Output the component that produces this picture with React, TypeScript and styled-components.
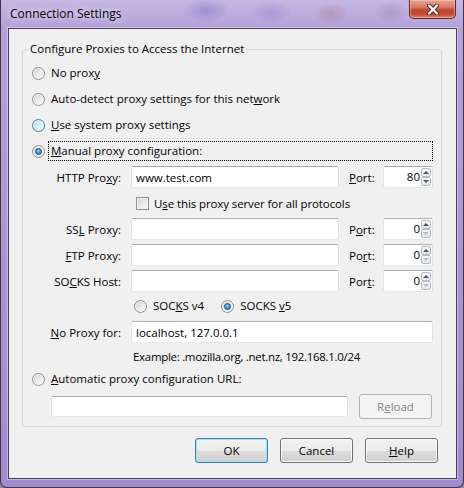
import React from 'react';
import styled, { createGlobalStyle, css } from 'styled-components';

const GlobalStyle = createGlobalStyle`
  html, body {
    margin: 0;
    padding: 0;
  }
  body {
    background: #8c8499;
    font-family: "Open Sans", "Noto Sans", "DejaVu Sans", sans-serif;
    font-size: 11.5px;
    color: #000;
  }
`;

// Aero glass frame round the dialog
const Window = styled.div`
  box-sizing: border-box;
  width: 464px;
  height: 488px;
  display: flex;
  flex-direction: column;
  padding: 0 6px 8px 7px;
  border: 1px solid #3d3550;
  border-top: none;
  border-radius: 0 0 7px 7px;
  background:
    radial-gradient(ellipse 34px 18px at 205px 10px, rgba(96, 92, 180, 0.35), transparent 70%),
    radial-gradient(ellipse 30px 16px at 270px 12px, rgba(130, 100, 200, 0.3), transparent 70%),
    radial-gradient(ellipse 26px 16px at 330px 14px, rgba(160, 100, 110, 0.3), transparent 70%),
    radial-gradient(ellipse 24px 16px at 390px 12px, rgba(120, 110, 150, 0.3), transparent 70%),
    linear-gradient(180deg, #c6b8e2 0px, #b4a3d9 26px, #a794d0 60%, #a28dcc 100%);
`;

const TitleBar = styled.div`
  height: 28px;
  flex: none;
  display: flex;
  align-items: flex-start;
`;

const Title = styled.span`
  margin: 6px 0 0 2px;
  font-size: 12px;
  line-height: 16px;
  text-shadow: 0 0 6px rgba(240, 236, 250, 0.9), 0 0 10px rgba(240, 236, 250, 0.7);
`;

const CloseButton = styled.div`
  margin-left: auto;
  margin-right: 1px;
  width: 47px;
  height: 19px;
  box-sizing: border-box;
  border: 1px solid #5b2a25;
  border-top: none;
  border-radius: 0 0 5px 5px;
  background: linear-gradient(180deg, #e9a493 0%, #d57a66 40%, #c2442e 55%, #c54b33 80%, #d98a70 100%);
  box-shadow: inset 0 0 0 1px rgba(255, 210, 200, 0.45);
  display: flex;
  align-items: center;
  justify-content: center;
`;

const Client = styled.div`
  flex: 1;
  display: flex;
  flex-direction: column;
  background: #f0f0f0;
  border: 1px solid #4a405e;
  box-shadow: 0 0 0 1px rgba(255, 255, 255, 0.35);
  padding: 12px 0 15px;
`;

const Group = styled.fieldset`
  margin: 0 14px 0 13px;
  padding: 3px 8px 6px 9px;
  border: 1px solid #d0d9df;
  border-radius: 3px;
  min-width: 0;
`;

const Legend = styled.legend`
  padding: 0 2px;
  margin-left: -4px;
  line-height: 16px;
`;

const OptionRow = styled.label<{ $height?: number }>`
  display: flex;
  align-items: center;
  height: ${p => p.$height ?? 26}px;
  gap: 3px;
  white-space: nowrap;
`;

const OptionText = styled.span<{ $focused?: boolean }>`
  padding: 1px 2px;
  line-height: 16px;
  border: 1px dotted ${p => (p.$focused ? '#000' : 'transparent')};
  ${p => p.$focused && css`flex: 1;`}
`;

const Radio = styled.span<{ $checked?: boolean; $hot?: boolean }>`
  flex: none;
  position: relative;
  box-sizing: border-box;
  width: 13px;
  height: 13px;
  border-radius: 50%;
  border: 1px solid ${p => (p.$hot ? '#3c7fb1' : '#8e8f8f')};
  background: ${p =>
    p.$hot
      ? 'linear-gradient(135deg, #b1dff5 0%, #dff3fc 60%, #f0f9fe 100%)'
      : 'linear-gradient(135deg, #cfcfcf 0%, #ececec 55%, #fafafa 100%)'};
  box-shadow: inset 0 0 0 1px rgba(255, 255, 255, 0.7);
  ${p =>
    p.$checked &&
    css`
      &::after {
        content: '';
        position: absolute;
        left: 2px;
        top: 2px;
        width: 7px;
        height: 7px;
        box-sizing: border-box;
        border-radius: 50%;
        border: 1px solid #1d4f7c;
        background: radial-gradient(circle at 45% 40%, #9ad9f7 0%, #3a8fd0 55%, #1f5c95 100%);
      }
    `}
`;

const CheckBox = styled.span`
  flex: none;
  width: 13px;
  height: 13px;
  box-sizing: border-box;
  border: 1px solid #8e8f8f;
  background: linear-gradient(135deg, #d2d2d2 0%, #ededed 60%, #f8f8f8 100%);
  box-shadow: inset 0 0 0 1px #f4f4f4;
`;

const ManualGrid = styled.div`
  display: grid;
  grid-template-columns: 89px 208px 24px 50px;
  grid-template-rows: repeat(5, 26px) 24px 28px 20px;
  column-gap: 10px;
  align-items: center;
`;

const FieldLabel = styled.span`
  text-align: right;
  white-space: nowrap;
`;

const PortLabel = styled.span`
  white-space: nowrap;
`;

const Span = styled.div<{ $indent?: number; $gap?: number; $tight?: boolean }>`
  grid-column: 2 / -1;
  display: flex;
  align-items: center;
  padding-left: ${p => p.$indent ?? 0}px;
  gap: ${p => p.$gap ?? 0}px;
  white-space: nowrap;
  letter-spacing: ${p => (p.$tight ? '-0.3px' : 'normal')};
`;

const CheckRow = styled.label`
  display: flex;
  align-items: center;
  gap: 5px;
  letter-spacing: -0.1px;
`;

const TextBox = styled.input<{ $width?: number; $height?: number }>`
  box-sizing: border-box;
  width: ${p => (p.$width ? `${p.$width}px` : '100%')};
  height: ${p => p.$height ?? 22}px;
  margin: 0;
  padding: 0 4px;
  font: inherit;
  color: #000;
  background: #fff;
  border: 1px solid;
  border-color: #abadb3 #dbdfe6 #e3e9ef #e2e3ea;
  border-radius: 2px;
  outline: none;
`;

const SpinBox = styled.div`
  box-sizing: border-box;
  width: 50px;
  height: 22px;
  display: flex;
  padding: 1px;
  background: #fff;
  border: 1px solid;
  border-color: #abadb3 #dbdfe6 #e3e9ef #e2e3ea;
  border-radius: 2px;
`;

const SpinValue = styled.span`
  flex: 1;
  text-align: right;
  line-height: 18px;
  padding-right: 1px;
`;

const SpinButtons = styled.div`
  width: 10px;
  display: flex;
  flex-direction: column;
`;

const SpinArrow = styled.span<{ $down?: boolean; $disabled?: boolean }>`
  flex: 1;
  position: relative;
  box-sizing: border-box;
  border: 1px solid #b4bcc7;
  border-radius: 2px;
  background: linear-gradient(180deg, #f6f8fa 0%, #e0e5eb 100%);
  &::after {
    content: '';
    position: absolute;
    left: 50%;
    top: 50%;
    margin: -2px 0 0 -3px;
    border-left: 3px solid transparent;
    border-right: 3px solid transparent;
    ${p =>
      p.$down
        ? css`border-top: 3px solid ${p.$disabled ? '#b8bcc2' : '#4a5568'};`
        : css`border-bottom: 3px solid ${p.$disabled ? '#b8bcc2' : '#4a5568'};`}
  }
`;

const UrlRow = styled.div`
  display: flex;
  align-items: center;
  height: 28px;
  padding-left: 19px;
  gap: 11px;
`;

const Button = styled.button<{ $primary?: boolean }>`
  box-sizing: border-box;
  width: 73px;
  height: 25px;
  padding: 0;
  font: inherit;
  color: #000;
  border: 1px solid ${p => (p.$primary ? '#3c7fb1' : '#707070')};
  border-radius: 3px;
  background: linear-gradient(180deg, #f2f2f2 0%, #ebebeb 50%, #dddddd 51%, #cfcfcf 100%);
  box-shadow: inset 0 0 0 1px ${p => (p.$primary ? '#a8def6' : '#fcfcfc')};
  &:disabled {
    color: #838383;
    border-color: #adb2b5;
    background: #f4f4f4;
    box-shadow: none;
  }
`;

const Footer = styled.div`
  display: flex;
  justify-content: flex-end;
  gap: 12px;
  margin: 11px 18px 0 0;
`;

type PortProps = { value: string; canDecrease?: boolean };

const Port = ({ value, canDecrease }: PortProps) => (
  <SpinBox>
    <SpinValue>{value}</SpinValue>
    <SpinButtons>
      <SpinArrow />
      <SpinArrow $down $disabled={!canDecrease} />
    </SpinButtons>
  </SpinBox>
);

const CloseGlyph = () => (
  <svg width="12" height="11" viewBox="0 0 12 11">
    <path d="M2 1.5 L10 9.5 M10 1.5 L2 9.5" stroke="#5a231c" strokeWidth="4.2" strokeLinecap="round" />
    <path d="M2 1.5 L10 9.5 M10 1.5 L2 9.5" stroke="#fff" strokeWidth="2.4" strokeLinecap="round" />
  </svg>
);

export default function App() {
  return (
    <>
      <GlobalStyle />
      <Window>
        <TitleBar>
          <Title>Connection Settings</Title>
          <CloseButton>
            <CloseGlyph />
          </CloseButton>
        </TitleBar>
        <Client>
          <Group>
            <Legend>Configure Proxies to Access the Internet</Legend>

            <OptionRow>
              <Radio />
              <OptionText>No prox<u>y</u></OptionText>
            </OptionRow>
            <OptionRow>
              <Radio />
              <OptionText>Auto-detect proxy settings for this net<u>w</u>ork</OptionText>
            </OptionRow>
            <OptionRow>
              <Radio $hot />
              <OptionText><u>U</u>se system proxy settings</OptionText>
            </OptionRow>
            <OptionRow>
              <Radio $checked />
              <OptionText $focused><u>M</u>anual proxy configuration:</OptionText>
            </OptionRow>

            <ManualGrid>
              <FieldLabel>HTTP Pro<u>x</u>y:</FieldLabel>
              <TextBox defaultValue="www.test.com" readOnly />
              <PortLabel><u>P</u>ort:</PortLabel>
              <Port value="80" canDecrease />

              <Span $indent={5}>
                <CheckRow>
                  <CheckBox />
                  <span>U<u>s</u>e this proxy server for all protocols</span>
                </CheckRow>
              </Span>

              <FieldLabel>SS<u>L</u> Proxy:</FieldLabel>
              <TextBox readOnly />
              <PortLabel>P<u>o</u>rt:</PortLabel>
              <Port value="0" />

              <FieldLabel><u>F</u>TP Proxy:</FieldLabel>
              <TextBox readOnly />
              <PortLabel>Po<u>r</u>t:</PortLabel>
              <Port value="0" />

              <FieldLabel>SO<u>C</u>KS Host:</FieldLabel>
              <TextBox readOnly />
              <PortLabel>Por<u>t</u>:</PortLabel>
              <Port value="0" />

              <Span $indent={3} $gap={14}>
                <OptionRow $height={24}>
                  <Radio />
                  <OptionText>SOC<u>K</u>S v4</OptionText>
                </OptionRow>
                <OptionRow $height={24}>
                  <Radio $checked />
                  <OptionText>SOCKS <u>v</u>5</OptionText>
                </OptionRow>
              </Span>

              <FieldLabel><u>N</u>o Proxy for:</FieldLabel>
              <Span>
                <TextBox defaultValue="localhost, 127.0.0.1" readOnly />
              </Span>

              <Span $indent={2} $tight>Example: .mozilla.org, .net.nz, 192.168.1.0/24</Span>
            </ManualGrid>

            <OptionRow>
              <Radio />
              <OptionText><u>A</u>utomatic proxy configuration URL:</OptionText>
            </OptionRow>
            <UrlRow>
              <TextBox $width={297} $height={21} readOnly />
              <Button disabled>
                R<u>e</u>load
              </Button>
            </UrlRow>
          </Group>

          <Footer>
            <Button $primary>OK</Button>
            <Button>Cancel</Button>
            <Button>
              <u>H</u>elp
            </Button>
          </Footer>
        </Client>
      </Window>
    </>
  );
}
